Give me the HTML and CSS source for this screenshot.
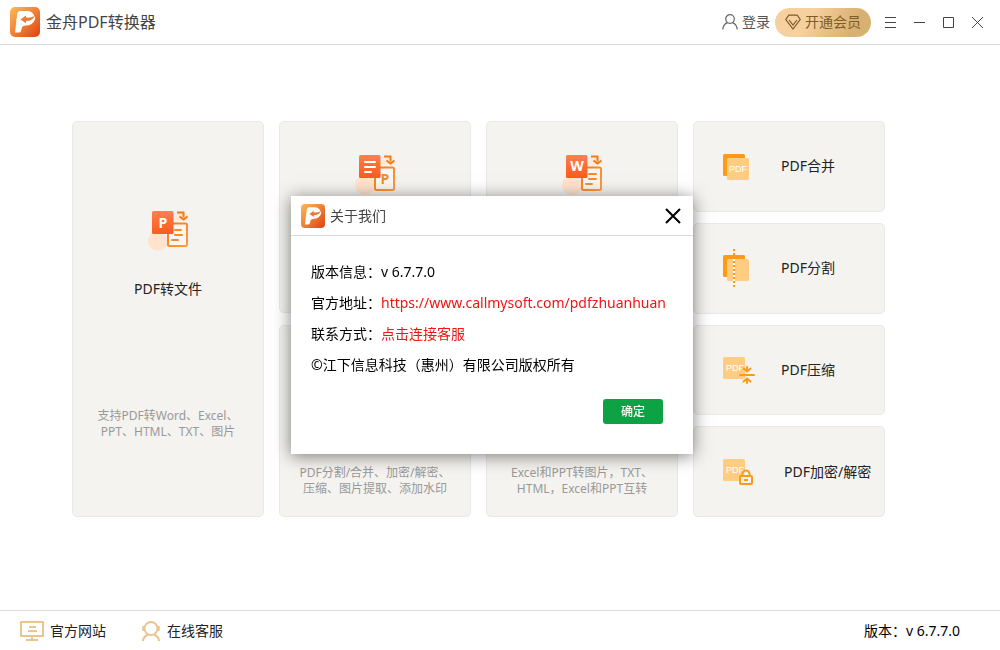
FILE: index.html
```html
<!DOCTYPE html>
<html lang="zh-CN">
<head>
<meta charset="utf-8">
<title>金舟PDF转换器</title>
<link rel="stylesheet" href="styles.css">
</head>
<body>
<svg class="defs" aria-hidden="true">
  <defs>
    <linearGradient id="logo-fill" x1="0" y1="0" x2="1" y2="1">
      <stop offset="0" stop-color="#fdb95c"/><stop offset=".5" stop-color="#f08034"/><stop offset="1" stop-color="#dd4012"/>
    </linearGradient>
    <linearGradient id="tile-fill" x1="0" y1="0" x2="0" y2="1">
      <stop offset="0" stop-color="#ff7f4c"/><stop offset="1" stop-color="#fb5a1e"/>
    </linearGradient>
    <linearGradient id="doc-line" x1="0" y1="0" x2="1" y2="1">
      <stop offset="0" stop-color="#f27a16"/><stop offset="1" stop-color="#ff9c46"/>
    </linearGradient>
    <symbol id="logo" viewBox="0 0 30 30">
      <rect width="30" height="30" rx="5" fill="url(#logo-fill)"/>
      <path d="M9.500 4H17Q22.500 4 24 8.500Q26 10 25 12.500Q22.500 18.500 16 18.500Q12.500 18.500 12 20.500L11 24Q10.500 25.500 9 25.500H5L7 8Q7.300 4.500 9.500 4Z" fill="#fff"/>
      <path d="M10.500 12.500L16 8.500V10.600Q21 11 25 8.700Q22.500 14 16 14V16.200Z" fill="#ee7a31"/>
    </symbol>
    <symbol id="convert-base" viewBox="0 0 41 42">
      <circle cx="10" cy="31" r="10" fill="#ffe3cd"/>
      <rect x="27" y="3" width="12" height="8" fill="#ffe9d8"/>
      <rect x="20" y="13.500" width="19" height="22.500" rx="1.500" fill="#f9f6f2" stroke="url(#doc-line)" stroke-width="2"/>
      <path d="M29 2.500h6.500v5" fill="none" stroke="#ee7d1a" stroke-width="2"/>
      <path d="M31.500 6.500l4 3 4-3" fill="none" stroke="#ee7d1a" stroke-width="2"/>
      <rect x="4" y="1" width="21.500" height="23" rx="1.500" fill="url(#tile-fill)"/>
    </symbol>
  </defs>
</svg>

<div class="app">
  <header class="titlebar">
    <div class="brand">
      <svg class="brand-logo" aria-hidden="true"><use href="#logo"/></svg>
      <h1 class="brand-name">金舟PDF转换器</h1>
    </div>
    <div class="actions">
      <button class="login" type="button">
        <svg width="16" height="16" viewBox="0 0 16 16" fill="none" stroke="#666" stroke-width="1.200" aria-hidden="true"><circle cx="8" cy="5" r="4.300"/><path d="M.8 15.500C1 12 3 9.500 5.600 8.600M15.200 15.500C15 12 13 9.500 10.400 8.600"/></svg>
        登录
      </button>
      <button class="vip" type="button">
        <svg width="16" height="16" viewBox="0 0 16 16" fill="none" stroke="#7d5c26" stroke-width="1.200" aria-hidden="true"><path d="M3.800 1.200h8.400l3 4.300L8 15 .8 5.500Z"/><path d="M4 6l4 5 4-5"/></svg>
        开通会员
      </button>
      <div class="window-controls">
        <button class="win" type="button" aria-label="菜单"><svg width="13" height="13" viewBox="0 0 13 13" aria-hidden="true"><path d="M1 1.500h11M1 6.500h11M1 11.500h11"/></svg></button>
        <button class="win" type="button" aria-label="最小化"><svg width="13" height="13" viewBox="0 0 13 13" aria-hidden="true"><path d="M1 6.500h11"/></svg></button>
        <button class="win" type="button" aria-label="最大化"><svg width="13" height="13" viewBox="0 0 13 13" aria-hidden="true"><path d="M1.500 1.500h10v10h-10z"/></svg></button>
        <button class="win" type="button" aria-label="关闭"><svg width="13" height="13" viewBox="0 0 13 13" aria-hidden="true"><path d="M1 1l11 11M12 1L1 12"/></svg></button>
      </div>
    </div>
  </header>

  <main class="board">
    <button class="card card-tall" type="button">
      <svg class="card-icon" viewBox="0 0 41 42" aria-hidden="true">
        <use href="#convert-base"/>
        <path d="M27 20h6M27 25h7M24 30h6" stroke="#f58a2c" stroke-width="2" stroke-linecap="round"/>
        <text class="tile-letter" x="15" y="18">P</text>
      </svg>
      <span class="card-label">PDF转文件</span>
      <span class="card-desc">支持PDF转Word、Excel、<br>PPT、HTML、TXT、图片</span>
    </button>

    <div class="stack">
      <button class="card card-half" type="button" aria-label="文件转PDF">
        <svg class="card-icon" viewBox="0 0 41 42" aria-hidden="true">
          <use href="#convert-base"/>
          <path d="M10 8h10M10 13h10M10 18h6" stroke="#fff" stroke-width="2" stroke-linecap="round"/>
          <text class="doc-letter" x="30" y="30">P</text>
        </svg>
      </button>
      <button class="card card-half card-end" type="button">
        <span class="card-desc">PDF分割/合并、加密/解密、<br>压缩、图片提取、添加水印</span>
      </button>
    </div>

    <div class="stack">
      <button class="card card-half" type="button" aria-label="Word转换">
        <svg class="card-icon" viewBox="0 0 41 42" aria-hidden="true">
          <use href="#convert-base"/>
          <path d="M27 20h7M27 25h7M24 30h6" stroke="#f58a2c" stroke-width="2" stroke-linecap="round"/>
          <text class="tile-letter" x="15" y="17">W</text>
        </svg>
      </button>
      <button class="card card-half card-end" type="button">
        <span class="card-desc">Excel和PPT转图片，TXT、<br>HTML，Excel和PPT互转</span>
      </button>
    </div>

    <div class="stack stack-tools">
      <button class="card tool" type="button">
        <svg class="tool-icon" viewBox="0 0 32 41" aria-hidden="true"><rect y="8" width="22" height="22" rx="1.500" fill="#ff9a12"/><rect x="4" y="12" width="22" height="22" rx="1.500" fill="#ffcd82"/><text class="tool-text" x="15" y="26">PDF</text></svg>
        <span>PDF合并</span>
      </button>
      <button class="card tool" type="button">
        <svg class="tool-icon" viewBox="0 0 32 41" aria-hidden="true"><rect y="7" width="22" height="22" rx="1.500" fill="#ff9a12"/><rect x="4" y="11" width="22" height="22" rx="1.500" fill="#ffcd82"/><path d="M11 11v22" stroke="#fff" stroke-width="2"/><path d="M11 1v40" stroke="#ff9a12" stroke-width="2" stroke-dasharray="2 2"/></svg>
        <span>PDF分割</span>
      </button>
      <button class="card tool" type="button">
        <svg class="tool-icon" viewBox="0 0 32 41" aria-hidden="true"><rect y="8" width="22" height="22" rx="1.500" fill="#ffcd82"/><text class="tool-text" x="12" y="22">PDF</text><path d="M17 26h14M24 18v4M20.500 19.500l3.500 3 3.500-3M24 34v-4M20.500 32.500l3.500-3 3.500 3" fill="none" stroke="#ff9a12" stroke-width="2" stroke-linecap="round"/></svg>
        <span>PDF压缩</span>
      </button>
      <button class="card tool tool-wide" type="button">
        <svg class="tool-icon" viewBox="0 0 32 41" aria-hidden="true"><rect y="8" width="22" height="22" rx="1.500" fill="#ffcd82"/><text class="tool-text" x="12" y="22">PDF</text><path d="M19.500 26v-3a3.500 3.500 0 0 1 7 0v3" fill="#f4f3ef" stroke="#ff9a12" stroke-width="2"/><rect x="17" y="25" width="12" height="8" rx="1" fill="#f4f3ef" stroke="#ff9a12" stroke-width="2"/><path d="M21 29h4" stroke="#ff9a12" stroke-width="2"/></svg>
        <span>PDF加密/解密</span>
      </button>
    </div>
  </main>

  <footer class="statusbar">
    <nav class="links">
      <a class="link" href="#site">
        <svg width="24" height="20" viewBox="0 0 24 20" fill="none" stroke="#ecc48d" stroke-width="2" aria-hidden="true"><path d="M1 1h22v14H1zM12 15v4M6 19h12M9 6h7M8 10h9"/></svg>
        官方网站
      </a>
      <a class="link" href="#service">
        <svg width="20" height="20" viewBox="0 0 20 20" fill="none" stroke="#ecc48d" stroke-width="2" aria-hidden="true"><circle cx="10" cy="7.500" r="6.500"/><path d="M2.500 5v5M17.500 5v5" stroke-width="2.500"/><path d="M2 20c0-3 2-5 5-6.500M18 20c0-3-2-5-5-6.500"/></svg>
        在线客服
      </a>
    </nav>
    <span class="version">版本：v 6.7.7.0</span>
  </footer>
</div>

<div class="overlay">
  <section class="dialog" role="dialog" aria-labelledby="about-title">
    <header class="dialog-head">
      <svg class="dialog-logo" aria-hidden="true"><use href="#logo"/></svg>
      <h2 class="dialog-title" id="about-title">关于我们</h2>
      <button class="dialog-close" type="button" aria-label="关闭"><svg width="16" height="16" viewBox="0 0 16 16" stroke="#000" stroke-width="2" aria-hidden="true"><path d="M1 1l14 14M15 1L1 15"/></svg></button>
    </header>
    <div class="dialog-body">
      <p class="row">版本信息：v 6.7.7.0</p>
      <p class="row">官方地址：<a class="row-link" href="https://www.callmysoft.com/pdfzhuanhuan">https://www.callmysoft.com/pdfzhuanhuan</a></p>
      <p class="row">联系方式：<a class="row-link" href="#service">点击连接客服</a></p>
      <p class="row">©江下信息科技（惠州）有限公司版权所有</p>
    </div>
    <footer class="dialog-foot">
      <button class="confirm" type="button">确定</button>
    </footer>
  </section>
</div>
</body>
</html>
```
FILE: styles.css
```css
* {
  box-sizing: border-box;
}

body {
  margin: 0;
  background: #fff;
  color: #222;
  font: 14px/20px "Noto Sans", "Noto Sans CJK SC", sans-serif;
}

button {
  margin: 0;
  padding: 0;
  border: 0;
  background: none;
  color: inherit;
  font: inherit;
  cursor: pointer;
}

h1, h2, p {
  margin: 0;
  font-weight: 400;
}

a {
  color: inherit;
  text-decoration: none;
}

svg {
  display: block;
  flex: none;
}

.defs {
  position: absolute;
  width: 0;
  height: 0;
}

.app {
  display: flex;
  flex-direction: column;
  min-height: 100vh;
}

.titlebar {
  display: flex;
  align-items: center;
  justify-content: space-between;
  height: 45px;
  padding: 0 8px 0 10px;
  border-bottom: 1px solid #dcdcdc;
}

.brand {
  display: flex;
  align-items: center;
  gap: 6px;
}

.brand-logo {
  width: 30px;
  height: 30px;
}

.brand-name {
  color: #444;
  font-size: 16px;
  line-height: 24px;
}

.actions {
  display: flex;
  align-items: center;
  gap: 5px;
}

.login {
  display: flex;
  align-items: center;
  gap: 4px;
  color: #555;
}

.vip {
  display: flex;
  align-items: center;
  gap: 4px;
  height: 29px;
  padding: 0 10px;
  border-radius: 15px;
  background: linear-gradient(120deg, #f7d09f 35%, #d8b072 80%);
  color: #7d5c26;
}

.window-controls {
  display: flex;
}

.win {
  display: grid;
  place-items: center;
  width: 29px;
  height: 29px;
  fill: none;
  stroke: #444;
}

.board {
  display: grid;
  flex: 1;
  grid-template-columns: repeat(4, 1fr);
  gap: 15px;
  padding: 76px 115px 93px 72px;
}

.stack {
  display: grid;
  grid-auto-rows: 1fr;
  gap: 12px;
}

.stack-tools {
  gap: 11px;
}

.card {
  display: flex;
  flex-direction: column;
  align-items: center;
  border: 1px solid #e9e9e8;
  border-radius: 5px;
  background: #f4f3ef;
}

.card-tall {
  padding-top: 88px;
}

.card-half {
  padding-top: 32px;
}

.card-end {
  justify-content: flex-end;
  padding-bottom: 19px;
}

.card-icon {
  width: 41px;
  height: 42px;
}

.card-label {
  margin-top: 27px;
}

.card-desc {
  color: #999;
  font-size: 12px;
  line-height: 16px;
}

.card-label + .card-desc {
  margin-top: 109px;
}

.tile-letter,
.doc-letter,
.tool-text {
  font-family: "Open Sans", sans-serif;
  font-size: 14px;
  font-weight: 700;
  text-anchor: middle;
  fill: #fff;
}

.doc-letter {
  fill: #f58a2c;
}

.tool-text {
  font-family: "Liberation Sans", sans-serif;
  font-size: 9px;
  font-weight: 400;
}

.tool {
  flex-direction: row;
  gap: 26px;
  padding-left: 29px;
}

.tool-wide {
  gap: 29px;
}

.tool-icon {
  width: 32px;
  height: 41px;
}

.statusbar {
  display: flex;
  align-items: center;
  justify-content: space-between;
  height: 40px;
  padding: 0 40px 0 20px;
  border-top: 1px solid #dcdcdc;
}

.links {
  display: flex;
  gap: 35px;
}

.link {
  display: flex;
  align-items: center;
  gap: 6px;
}

.version {
  color: #000;
}

.overlay {
  position: fixed;
  inset: 0;
  display: flex;
  align-items: center;
  justify-content: center;
  padding-right: 16px;
}

.dialog {
  width: 402px;
  background: #fff;
  box-shadow: 0 2px 16px rgba(0, 0, 0, 0.5);
}

.dialog-head {
  display: flex;
  align-items: center;
  gap: 5px;
  height: 40px;
  padding: 0 12px 0 10px;
  border-bottom: 1px solid #dcdcdc;
}

.dialog-logo {
  width: 24px;
  height: 24px;
}

.dialog-title {
  flex: 1;
  color: #444;
  font-size: 14px;
}

.dialog-body {
  padding: 20px 20px 0;
  color: #000;
}

.row {
  line-height: 31px;
  white-space: nowrap;
}

.row-link {
  color: #f01414;
}

.dialog-foot {
  display: flex;
  justify-content: flex-end;
  padding: 19px 30px 30px;
}

.confirm {
  width: 60px;
  height: 25px;
  border-radius: 3px;
  background: #0da345;
  color: #fff;
  font-size: 12px;
  font-weight: 500;
}
```
